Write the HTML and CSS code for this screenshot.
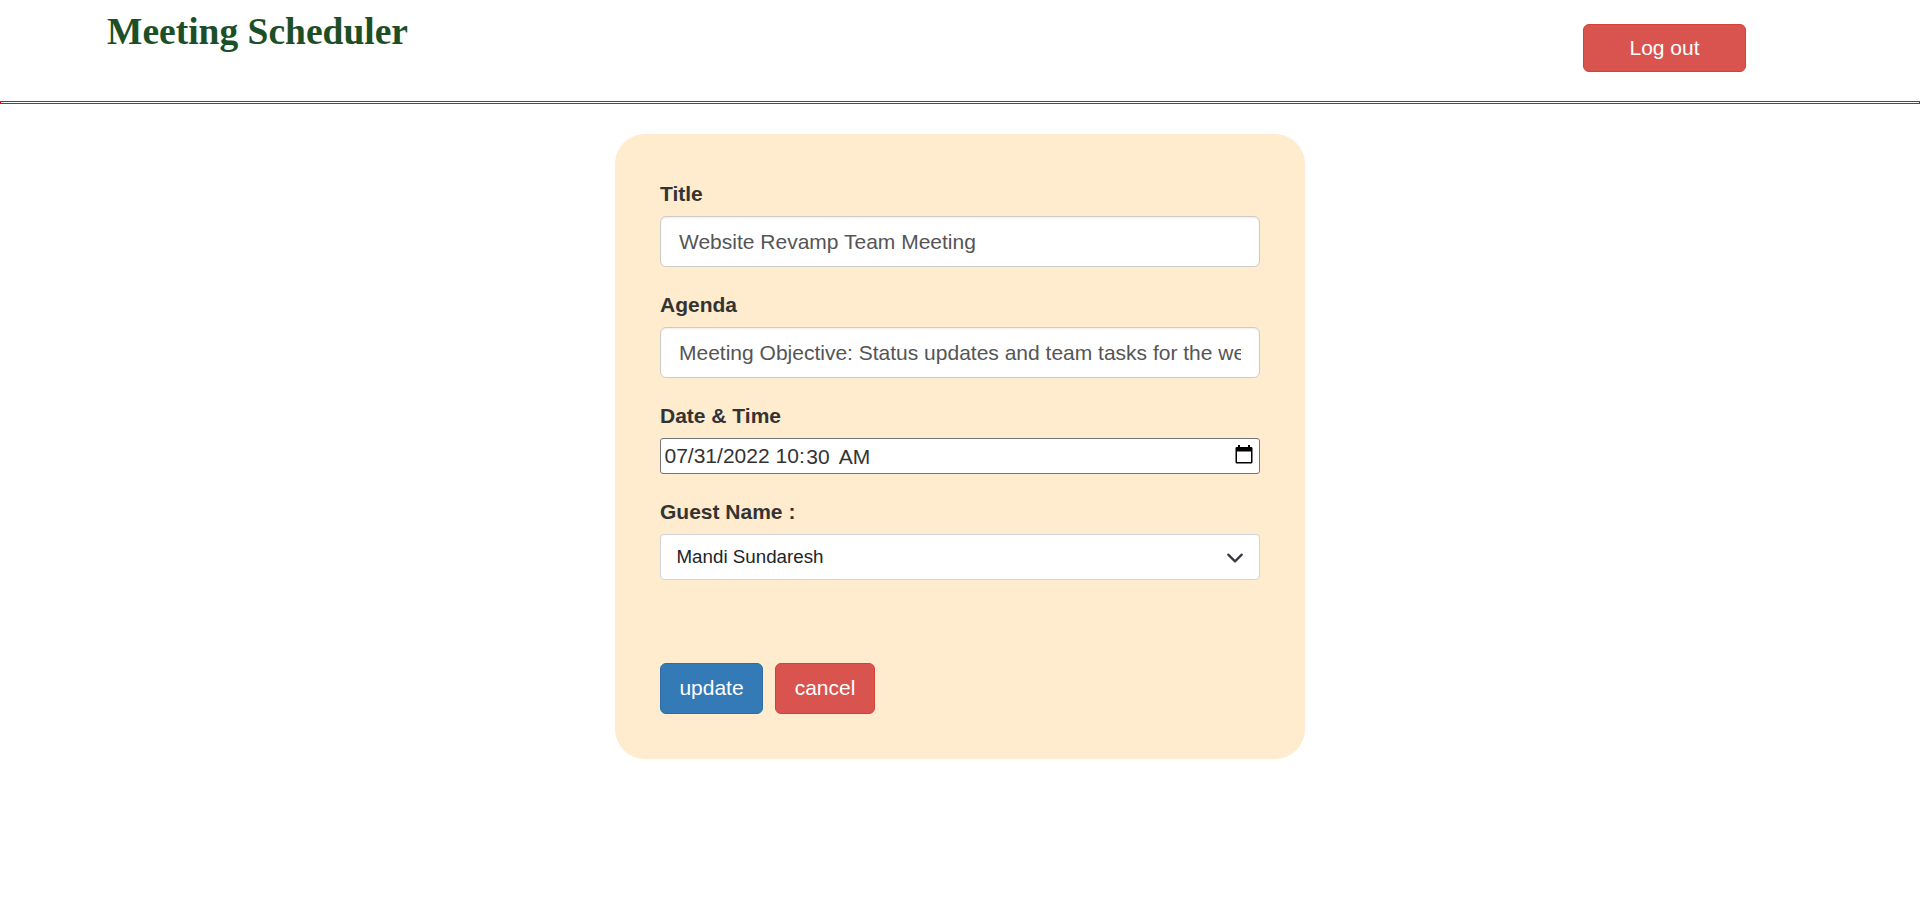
FILE: index.html
```html
<!DOCTYPE html>
<html lang="en">
<head>
<meta charset="utf-8">
<title>Meeting Scheduler</title>
<link rel="stylesheet" href="styles.css">
</head>
<body>
<header class="header">
  <h1 class="brand">Meeting Scheduler</h1>
  <button class="btn btn-danger logout" type="button">Log out</button>
</header>
<div class="rule"></div>
<main class="card">
  <label class="label" for="title">Title</label>
  <input class="input" id="title" type="text" value="Website Revamp Team Meeting">
  <label class="label" for="agenda">Agenda</label>
  <input class="input" id="agenda" type="text" value="Meeting Objective: Status updates and team tasks for the week ahead">
  <div class="label">Date &amp; Time</div>
  <div class="datetime">
    <span class="date">07/31/2022</span><span class="hour">10:</span><span class="minute">30</span><span class="period">AM</span>
    <svg class="calendar" width="18" height="20" viewBox="0 0 18 20"><path fill="#000" fill-rule="evenodd" d="M3 0h2v2h8V0h2v2h1.200q1.300 0 1.300 1.300v13.900q0 1.300-1.300 1.300H1.800q-1.300 0-1.300-1.300V3.300Q.5 2 1.800 2H3zM2 6.500V17h14V6.500z"/></svg>
  </div>
  <div class="label">Guest Name :</div>
  <div class="select">
    <span>Mandi Sundaresh</span>
    <svg class="chevron" width="18" height="18" viewBox="0 0 16 16"><path fill="none" stroke="#343a40" stroke-width="2" stroke-linecap="round" stroke-linejoin="round" d="m2 5 6 6 6-6"/></svg>
  </div>
  <div class="actions">
    <button class="btn btn-primary update" type="button">update</button>
    <button class="btn btn-danger cancel" type="button">cancel</button>
  </div>
</main>
</body>
</html>
```
FILE: styles.css
```css
* { box-sizing: border-box; }
body {
  margin: 0;
  background: #fff;
  color: #333;
  font: 21px/30px "Liberation Sans", Arial, sans-serif;
}
.header {
  display: flex;
  justify-content: space-between;
  align-items: flex-start;
  height: 101px;
  padding: 0 174px 0 107px;
}
.brand {
  margin: 11px 0 0;
  color: #1d4f27;
  font: bold 37.5px/42px "Liberation Serif", "Times New Roman", serif;
}
.rule { height: 3px; border: 1px solid #f00; }
.btn {
  height: 51px;
  padding: 0 0 1px;
  border: 1px solid;
  border-radius: 6px;
  color: #fff;
  font: inherit;
}
.btn-primary { background: #337ab7; border-color: #2e6da4; }
.btn-danger { background: #d9534f; border-color: #d43f3a; }
.logout { width: 163px; height: 48px; margin-top: 24px; padding: 0; }
.update { width: 103px; }
.cancel { width: 100px; }
.card {
  width: 690px;
  height: 625px;
  margin: 30px auto 0;
  padding: 45px;
  border-radius: 30px;
  background: #ffebcd;
}
.label {
  display: block;
  margin-bottom: 7px;
  font-weight: bold;
}
.input {
  display: block;
  width: 100%;
  height: 51px;
  margin-bottom: 23px;
  padding: 9px 18px;
  border: 1px solid #ccc;
  border-radius: 6px;
  background: #fff;
  box-shadow: inset 0 1px 2px rgba(0, 0, 0, .08);
  color: #555;
  font: inherit;
}
.datetime {
  display: flex;
  align-items: center;
  height: 36px;
  margin-bottom: 23px;
  padding: 0 6.500px 0 3.500px;
  border: 1px solid #767676;
  border-radius: 3px;
  background: #fff;
}
.hour { margin-left: 6px; }
.minute { margin: 2px 0 0 1.500px; }
.period { margin: 2px 0 0 9px; }
.calendar { margin: 0 0 3px auto; }
.select {
  display: flex;
  align-items: center;
  justify-content: space-between;
  height: 46px;
  padding: 0 15px 0 15.500px;
  border: 1px solid #ced4da;
  border-radius: 4px;
  background: #fff;
  color: #212529;
  font-size: 18.75px;
}
.select span { padding-bottom: 1px; }
.chevron { margin-top: 1px; }
.actions { display: flex; gap: 12px; margin-top: 83px; }
```
